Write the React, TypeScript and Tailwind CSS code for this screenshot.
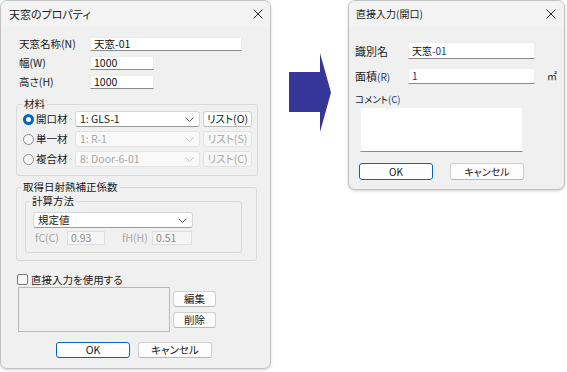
import React from "react";

const Chevron = ({ color = "#5a5a5a" }: { color?: string }) => (
  <svg width="9" height="5" viewBox="0 0 9 5" fill="none">
    <path d="M0.5 0.5 L4.5 4.5 L8.5 0.5" stroke={color} strokeWidth="1" />
  </svg>
);

const CloseX = () => (
  <svg width="10" height="10" viewBox="0 0 10 10" fill="none">
    <path d="M0.5 0.5 L9.5 9.5 M9.5 0.5 L0.5 9.5" stroke="#2b2b2b" strokeWidth="1" />
  </svg>
);

function Radio({ checked }: { checked?: boolean }) {
  if (checked)
    return (
      <span className="flex h-[11px] w-[11px] shrink-0 items-center justify-center rounded-full bg-[#0067c0]">
        <span className="h-[5px] w-[5px] rounded-full bg-white" />
      </span>
    );
  return <span className="h-[11px] w-[11px] shrink-0 rounded-full border border-[#8a8a8a] bg-[#f7f7f7]" />;
}

function Dropdown({ text, disabled, w }: { text: string; disabled?: boolean; w: string }) {
  return (
    <div
      className={
        "flex h-[16px] items-center justify-between rounded-[3px] border pl-[4px] pr-[5px] " +
        w +
        (disabled
          ? " border-[#e3e3e3] bg-[#f9f9f9] text-[#a6a6a6]"
          : " border-[#d6d6d6] border-b-[#9a9a9a] bg-white text-[#1a1a1a]")
      }
    >
      <span>{text}</span>
      <Chevron color={disabled ? "#c4c4c4" : "#5a5a5a"} />
    </div>
  );
}

function Btn({ text, disabled, w, h, primary }: { text: string; disabled?: boolean; w: string; h: string; primary?: boolean }) {
  return (
    <div
      className={
        "flex items-center justify-center rounded-[3px] border " +
        w +
        " " +
        h +
        (disabled
          ? " border-[#e3e3e3] bg-[#f7f7f7] text-[#a6a6a6]"
          : primary
          ? " border-[#0067c0] bg-[#fdfdfd] text-[#1a1a1a]"
          : " border-[#d0d0d0] border-b-[#b8b8b8] bg-[#fdfdfd] text-[#1a1a1a]")
      }
    >
      {text}
    </div>
  );
}

function Input({ text, w, h = "h-[14px]" }: { text: React.ReactNode; w: string; h?: string }) {
  return (
    <div className={"flex items-center border border-[#ececec] border-b-[#8a8a8a] bg-white pl-[3px] text-[#111] " + w + " " + h}>
      {text}
    </div>
  );
}

function LeftDialog() {
  return (
    <div className="flex h-[369px] w-[271px] shrink-0 flex-col overflow-hidden rounded-[7px] border border-[#c2c2c2] bg-[#f0f0f0] text-[10.5px] leading-[12px] text-[#1a1a1a] shadow-[0_1px_3px_rgba(0,0,0,0.18)]">
      <div className="flex h-[26px] shrink-0 items-center justify-between bg-[#f3f3f3] pl-[8px] pr-[7px]">
        <span className="text-[11px]">天窓のプロパティ</span>
        <CloseX />
      </div>
      <div className="flex flex-col pt-[10px]">
        <div className="flex h-[14px] items-center pl-[18px]">
          <span className="w-[71px]">天窓名称(N)</span>
          <Input text="天窓-01" w="w-[152px]" />
        </div>
        <div className="mt-[5px] flex h-[14px] items-center pl-[18px]">
          <span className="w-[71px]">幅(W)</span>
          <Input text="1000" w="w-[64px]" />
        </div>
        <div className="mt-[5px] flex h-[14px] items-center pl-[18px]">
          <span className="w-[71px]">高さ(H)</span>
          <Input text="1000" w="w-[64px]" />
        </div>

        <fieldset className="ml-[15px] mt-[9px] w-[242px] rounded-[3px] border border-[#d9d9d9]">
          <legend className="ml-[5px] px-[2px] leading-[12px]">材料</legend>
          <div className="flex flex-col gap-[4px] pb-[8px] pl-[6px] pt-[1px]">
            {[
              { label: "開口材", v: "1: GLS-1", b: "リスト(O)", on: true },
              { label: "単一材", v: "1: R-1", b: "リスト(S)" },
              { label: "複合材", v: "8: Door-6-01", b: "リスト(C)" },
            ].map((r) => (
              <div key={r.label} className="flex h-[16px] items-center">
                <Radio checked={r.on} />
                <span className="ml-[2px] w-[39px]">{r.label}</span>
                <Dropdown text={r.v} disabled={!r.on} w="w-[125px]" />
                <div className="ml-[3px]">
                  <Btn text={r.b} disabled={!r.on} w="w-[49px]" h="h-[16px]" />
                </div>
              </div>
            ))}
          </div>
        </fieldset>

        <fieldset className="ml-[15px] mt-[5px] w-[241px] rounded-[3px] border border-[#d9d9d9]">
          <legend className="ml-[4px] px-[2px] leading-[12px]">取得日射熱補正係数</legend>
          <div className="pb-[7px] pl-[8px] pt-[2px]">
            <fieldset className="w-[217px] rounded-[3px] border border-[#d9d9d9]">
              <legend className="ml-[4px] px-[2px] leading-[12px]">計算方法</legend>
              <div className="flex flex-col pb-[7px] pl-[7px] pt-[5px]">
                <Dropdown text="規定値" w="w-[160px]" />
                <div className="mt-[3px] flex h-[14px] items-center pl-[2px] text-[#a6a6a6]">
                  <span className="w-[30px]">fC(C)</span>
                  <div className="ml-[2px] flex h-[14px] w-[38px] items-center border border-[#dedede] bg-[#f5f5f5] pl-[3px] text-[#8c8c8c]">0.93</div>
                  <span className="ml-[17px] w-[28px]">fH(H)</span>
                  <div className="ml-[2px] flex h-[14px] w-[40px] items-center border border-[#dedede] bg-[#f5f5f5] pl-[3px] text-[#8c8c8c]">0.51</div>
                </div>
              </div>
            </fieldset>
          </div>
        </fieldset>

        <div className="mt-[13px] flex h-[11px] items-center pl-[16px]">
          <span className="h-[11px] w-[11px] rounded-[2px] border border-[#7a7a7a] bg-[#f7f7f7]" />
          <span className="ml-[3px]">直接入力を使用する</span>
        </div>
        <div className="mt-[2px] flex pl-[17px]">
          <div className="h-[45px] w-[152px] border border-[#b9b9b9] bg-[#f0f0f0]" />
          <div className="ml-[3px] flex flex-col gap-[5px] pt-[4px]">
            <Btn text="編集" w="w-[43px]" h="h-[16px]" />
            <Btn text="削除" w="w-[43px]" h="h-[16px]" />
          </div>
        </div>
        <div className="mt-[10px] flex pl-[55px]">
          <Btn text="OK" primary w="w-[74px]" h="h-[16px]" />
          <div className="ml-[8px]">
            <Btn text="キャンセル" w="w-[74px]" h="h-[16px]" />
          </div>
        </div>
      </div>
    </div>
  );
}

function RightDialog() {
  return (
    <div className="flex h-[190px] w-[217px] shrink-0 flex-col overflow-hidden rounded-[7px] border border-[#c2c2c2] bg-[#f0f0f0] text-[10px] leading-[12px] text-[#1a1a1a] shadow-[0_1px_3px_rgba(0,0,0,0.18)]">
      <div className="flex h-[26px] shrink-0 items-center justify-between bg-[#f3f3f3] pl-[7px] pr-[8px]">
        <span>直接入力(開口)</span>
        <CloseX />
      </div>
      <div className="flex flex-col pt-[15px]">
        <div className="flex h-[17px] items-center pl-[6px]">
          <span className="w-[53px] text-[11px]">識別名</span>
          <Input
            text={
              <span>
                天窓<span className="text-[#22358a]">-01</span>
              </span>
            }
            w="w-[127px]"
            h="h-[17px]"
          />
        </div>
        <div className="mt-[9px] flex h-[16px] items-center pl-[6px]">
          <span className="w-[53px] text-[11px]">
            面積<span className="text-[10px] text-[#22358a]">(R)</span>
          </span>
          <Input text={<span className="text-[#22358a]">1</span>} w="w-[127px]" h="h-[16px]" />
          <span className="ml-[12px] text-[10px]">㎡</span>
        </div>
        <div className="mt-[9px] h-[12px] pl-[6px] text-[9.5px]">
          コメント<span className="text-[#22358a]">(C)</span>
        </div>
        <div className="ml-[11px] mt-[2px] h-[45px] w-[163px] border border-[#f0f0f0] border-b-[#8a8a8a] bg-white" />
        <div className="mt-[11px] flex pl-[10px]">
          <Btn text="OK" primary w="w-[74px]" h="h-[17px]" />
          <div className="ml-[17px]">
            <Btn text="キャンセル" w="w-[74px]" h="h-[17px]" />
          </div>
        </div>
      </div>
    </div>
  );
}

export default function App() {
  return (
    <div className="flex h-[372px] w-[567px] items-start overflow-hidden bg-white font-['Noto_Sans_CJK_JP','Noto_Sans',sans-serif] [font-feature-settings:'palt']">
      <LeftDialog />
      <svg className="ml-[18px] mt-[53px] shrink-0" width="42" height="79" viewBox="0 0 42 79">
        <polygon points="0,19 31,19 31,0 42,39.5 31,79 31,59 0,59" fill="#36369a" />
      </svg>
      <div className="ml-[17px]">
        <RightDialog />
      </div>
    </div>
  );
}
